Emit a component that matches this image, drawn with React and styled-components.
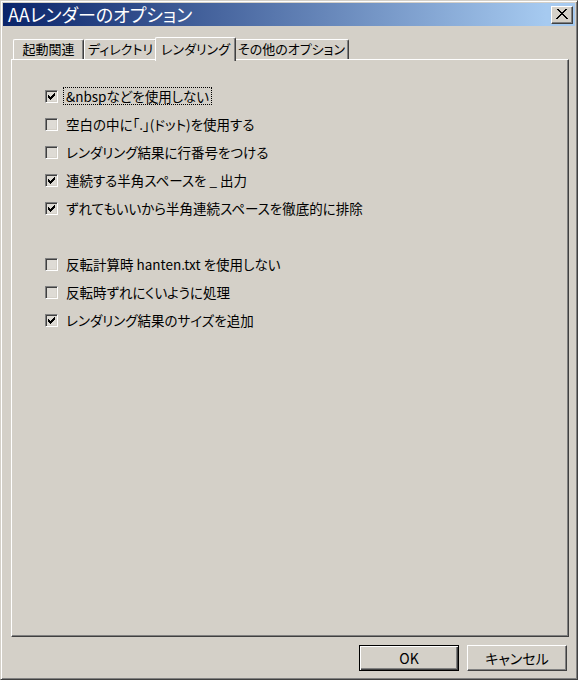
import React from "react";
import styled, { createGlobalStyle } from "styled-components";

const Global = createGlobalStyle`
  html, body { margin: 0; padding: 0; background: #d4d0c8; }
  * { box-sizing: border-box; }
`;

const FONT = `"Noto Sans CJK JP", "Liberation Sans", sans-serif`;

const Window = styled.div`
  width: 578px;
  height: 680px;
  background: #d4d0c8;
  border: 1px solid;
  border-color: #d4d0c8 #404040 #404040 #d4d0c8;
  box-shadow: inset 1px 1px 0 #ffffff, inset -1px -1px 0 #808080;
  padding: 2px;
  display: flex;
  flex-direction: column;
  font-family: ${FONT};
  font-feature-settings: "palt";
  color: #000;
`;

const TitleBar = styled.div`
  height: 23px;
  flex: none;
  display: flex;
  align-items: center;
  padding: 0 2px 0 5px;
  background: linear-gradient(to right, #0a246a 0%, #a6caf0 95%, #a6caf0 100%);
`;

const TitleText = styled.div`
  flex: 1;
  color: #ffffff;
  font-size: 18px;
  line-height: 23px;
  white-space: nowrap;
`;

const CloseButton = styled.div`
  width: 22px;
  height: 18px;
  background: #d4d0c8;
  border: 1px solid;
  border-color: #ffffff #404040 #404040 #ffffff;
  box-shadow: inset -1px -1px 0 #808080;
  display: flex;
  align-items: center;
  justify-content: center;
`;

const Body = styled.div`
  flex: 1;
  display: flex;
  flex-direction: column;
  padding: 11px 6px 6px 8px;
`;

const TabStrip = styled.div`
  display: flex;
  align-items: flex-end;
  height: 22px;
  padding-left: 2px;
  position: relative;
  z-index: 1;
`;

const Tab = styled.div`
  width: ${(p) => p.$w}px;
  flex: none;
  height: ${(p) => (p.$active ? "24px" : "20px")};
  margin: ${(p) => (p.$active ? "0 -2px -2px -2px" : "0")};
  padding-top: ${(p) => (p.$active ? "2px" : "0")};
  background: #d4d0c8;
  border-top: 1px solid #ffffff;
  border-left: 1px solid #ffffff;
  border-right: 1px solid #404040;
  border-radius: 2px 2px 0 0;
  box-shadow: inset -1px 0 0 #808080;
  font-size: 13px;
  line-height: 18px;
  text-align: center;
  white-space: nowrap;
  position: relative;
  z-index: ${(p) => (p.$active ? 2 : 0)};
`;

const Panel = styled.div`
  flex: 1;
  background: #d4d0c8;
  border: 1px solid;
  border-color: #ffffff #404040 #404040 #ffffff;
  box-shadow: inset -1px -1px 0 #808080;
  padding: 22px 0 0 33px;
  display: flex;
  flex-direction: column;
`;

const Group = styled.div`
  display: flex;
  flex-direction: column;
  margin-bottom: ${(p) => p.$gap || 0}px;
`;

const Row = styled.div`
  height: 28px;
  display: flex;
  align-items: center;
  gap: 5px;
  font-size: 13.5px;
  white-space: nowrap;
`;

const Box = styled.div`
  width: 13px;
  height: 13px;
  flex: none;
  border: 1px solid;
  border-color: #808080 #ffffff #ffffff #808080;
  box-shadow: inset 1px 1px 0 #404040, inset -1px -1px 0 #d4d0c8;
  background: #dedbd5;
  display: flex;
  align-items: center;
  justify-content: center;
`;

const Label = styled.span`
  padding: 0 2px;
  line-height: 16px;
  border: 1px dotted ${(p) => (p.$focus ? "#000" : "transparent")};
`;

const Footer = styled.div`
  display: flex;
  justify-content: flex-end;
  gap: 8px;
  margin-top: 8px;
  padding-right: 2px;
`;

const Button = styled.div`
  width: 100px;
  height: 26px;
  background: #d4d0c8;
  border: 1px solid;
  border-color: ${(p) => (p.$default ? "#000" : "#ffffff #404040 #404040 #ffffff")};
  box-shadow: ${(p) =>
    p.$default
      ? "inset 1px 1px 0 #ffffff, inset -1px -1px 0 #404040, inset -2px -2px 0 #808080"
      : "inset -1px -1px 0 #808080"};
  display: flex;
  align-items: center;
  justify-content: center;
  font-size: 14px;
`;

const Check = () => (
  <svg width="7" height="7" viewBox="0 0 7 7" shapeRendering="crispEdges">
    {[2, 3, 4, 3, 2, 1, 0].map((y, x) => (
      <rect key={x} x={x} y={y} width="1" height="3" fill="#000" />
    ))}
  </svg>
);

const CloseIcon = () => (
  <svg width="12" height="11" viewBox="0 0 12 11" shapeRendering="crispEdges">
    <path d="M1 0 L11 10 M2 0 L12 10 M11 0 L1 10 M10 0 L0 10" stroke="#000" strokeWidth="1.4" />
  </svg>
);

const Option = ({ checked, focus, children }) => (
  <Row>
    <Box>{checked && <Check />}</Box>
    <Label $focus={focus}>{children}</Label>
  </Row>
);

const groupA = [
  { text: "&nbspなどを使用しない", checked: true, focus: true },
  { text: "空白の中に「.」(ドット)を使用する", checked: false },
  { text: "レンダリング結果に行番号をつける", checked: false },
  { text: "連続する半角スペースを _ 出力", checked: true },
  { text: "ずれてもいいから半角連続スペースを徹底的に排除", checked: true },
];

const groupB = [
  { text: "反転計算時 hanten.txt を使用しない", checked: false },
  { text: "反転時ずれにくいように処理", checked: false },
  { text: "レンダリング結果のサイズを追加", checked: true },
];

const tabs = [
  { text: "起動関連", w: 71 },
  { text: "ディレクトリ", w: 73 },
  { text: "レンダリング", w: 81, active: true },
  { text: "その他のオプション", w: 115 },
];

export default function App() {
  return (
    <>
      <Global />
      <Window>
        <TitleBar>
          <TitleText>AAレンダーのオプション</TitleText>
          <CloseButton>
            <CloseIcon />
          </CloseButton>
        </TitleBar>
        <Body>
          <TabStrip>
            {tabs.map((t) => (
              <Tab key={t.text} $w={t.w} $active={t.active}>
                {t.text}
              </Tab>
            ))}
          </TabStrip>
          <Panel>
            <Group $gap={28}>
              {groupA.map((o) => (
                <Option key={o.text} checked={o.checked} focus={o.focus}>
                  {o.text}
                </Option>
              ))}
            </Group>
            <Group>
              {groupB.map((o) => (
                <Option key={o.text} checked={o.checked}>
                  {o.text}
                </Option>
              ))}
            </Group>
          </Panel>
          <Footer>
            <Button $default>OK</Button>
            <Button>キャンセル</Button>
          </Footer>
        </Body>
      </Window>
    </>
  );
}
